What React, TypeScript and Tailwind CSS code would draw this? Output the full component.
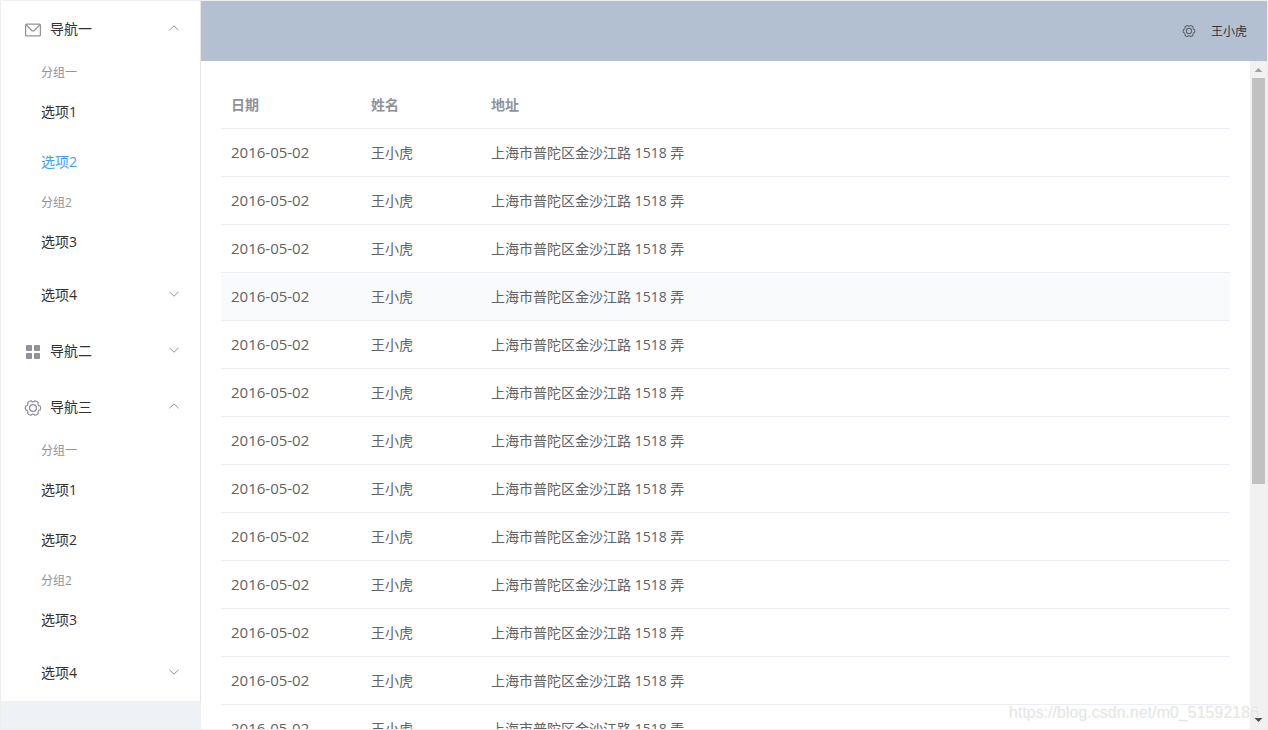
import { useState } from 'react';
import type { ReactNode, UIEvent } from 'react';

const groups = [
  { title: '分组一', items: ['选项1', '选项2'] },
  { title: '分组2', items: ['选项3'] },
];

const rows = Array.from({ length: 20 }, () => ({
  date: '2016-05-02',
  name: '王小虎',
  address: '上海市普陀区金沙江路 1518 弄',
}));

function MessageIcon() {
  return (
    <svg viewBox="0 0 18 18" className="size-[18px]" fill="none" stroke="currentColor" strokeWidth="1.3" aria-hidden="true">
      <rect x="1.6" y="3.1" width="14.8" height="11.8" rx="1.2" />
      <path d="M2 3.6 L7.4 9.2 Q9 10.6 10.6 9.2 L16 3.6" />
    </svg>
  );
}

function MenuIcon() {
  return (
    <svg viewBox="0 0 18 18" className="size-[18px]" fill="currentColor" aria-hidden="true">
      <rect x="2" y="2" width="6" height="6" rx="0.8" />
      <rect x="10" y="2" width="6" height="6" rx="0.8" />
      <rect x="2" y="10" width="6" height="6" rx="0.8" />
      <rect x="10" y="10" width="6" height="6" rx="0.8" />
    </svg>
  );
}

function SettingIcon({ className }: { className: string }) {
  return (
    <svg viewBox="-9 -9 18 18" className={className} fill="none" stroke="currentColor" strokeWidth="1.3" strokeLinejoin="round" aria-hidden="true">
      <path d="M7.2 -1.9 Q8 0 7.2 1.9 Q4.4 2.5 5.25 5.3 Q4 7 2 7.2 Q0 5 -2 7.2 Q-4 7 -5.25 5.3 Q-4.4 2.5 -7.2 1.9 Q-8 0 -7.2 -1.9 Q-4.4 -2.5 -5.25 -5.3 Q-4 -7 -2 -7.2 Q0 -5 2 -7.2 Q4 -7 5.25 -5.3 Q4.4 -2.5 7.2 -1.9Z" />
      <circle r="3.4" />
    </svg>
  );
}

function Chevron({ open }: { open: boolean }) {
  return (
    <svg viewBox="0 0 12 12" className="mb-0.5 size-3 text-[#909399]" fill="none" stroke="currentColor" strokeWidth="1" aria-hidden="true">
      <path d={open ? 'M1.5 8.2 L6 3.8 L10.5 8.2' : 'M1.5 3.8 L6 8.2 L10.5 3.8'} />
    </svg>
  );
}

interface SubmenuProps {
  title: string;
  icon?: ReactNode;
  defaultOpen?: boolean;
  children?: ReactNode;
}

function Submenu({ title, icon, defaultOpen = false, children }: SubmenuProps) {
  const [open, setOpen] = useState(defaultOpen);

  return (
    <li>
      <button
        type="button"
        aria-expanded={open}
        onClick={() => setOpen(!open)}
        className={`flex h-14 w-full cursor-pointer items-center pr-5 text-left text-sm ${icon ? 'pl-5' : 'pl-10'}`}
      >
        {icon && <span className="mt-0.5 mr-[5px] flex w-6 justify-center text-[#909399]">{icon}</span>}
        <span className="flex-1">{title}</span>
        <Chevron open={open} />
      </button>
      {open && children}
    </li>
  );
}

function MenuGroups({ active, onSelect }: { active?: string; onSelect: (item: string) => void }) {
  return (
    <ul>
      {groups.map((group) => (
        <li key={group.title}>
          <div className="flex h-[30px] items-center pt-0.5 pl-10 text-xs text-[#909399]">{group.title}</div>
          <ul>
            {group.items.map((item) => (
              <li key={item}>
                <a
                  href="#"
                  onClick={(e) => {
                    e.preventDefault();
                    onSelect(item);
                  }}
                  className={`flex h-[50px] items-center pl-10 text-sm ${item === active ? 'text-[#409eff]' : ''}`}
                >
                  {item}
                </a>
              </li>
            ))}
          </ul>
        </li>
      ))}
      <Submenu title="选项4" />
    </ul>
  );
}

export default function App() {
  const [active, setActive] = useState('1-选项2');
  const [scroll, setScroll] = useState(0);

  const handleScroll = (e: UIEvent<HTMLElement>) => {
    const el = e.currentTarget;
    setScroll(el.scrollTop / (el.scrollHeight - el.clientHeight));
  };

  const pick = (menu: string) => (item: string) => setActive(`${menu}-${item}`);
  const activeIn = (menu: string) => (active.startsWith(`${menu}-`) ? active.slice(2) : undefined);

  return (
    <div className="relative flex h-screen border border-[#eee] bg-white font-['Open_Sans','Noto_Sans_CJK_SC',sans-serif] text-[#303133]">
      {/* Side navigation */}
      <aside className="w-[200px] shrink-0 overflow-y-auto bg-[#eef1f6] [scrollbar-width:none]">
        <nav>
          <ul className="border-r border-[#e6e6e6] bg-white">
            <Submenu title="导航一" icon={<MessageIcon />} defaultOpen>
              <MenuGroups active={activeIn('1')} onSelect={pick('1')} />
            </Submenu>
            <Submenu title="导航二" icon={<MenuIcon />}>
              <MenuGroups active={activeIn('2')} onSelect={pick('2')} />
            </Submenu>
            <Submenu title="导航三" icon={<SettingIcon className="size-[18px]" />} defaultOpen>
              <MenuGroups active={activeIn('3')} onSelect={pick('3')} />
            </Submenu>
          </ul>
        </nav>
      </aside>

      <div className="flex min-w-0 flex-1 flex-col">
        <header className="flex h-[60px] shrink-0 items-center justify-end gap-[15px] bg-[#b3c0d1] px-5 text-xs text-[#333]">
          <button type="button" aria-label="设置" className="cursor-pointer text-[#606266]">
            <SettingIcon className="size-3.5" />
          </button>
          <span className="pt-0.5">王小虎</span>
        </header>

        <div className="flex min-h-0 flex-1">
          <main onScroll={handleScroll} className="min-w-0 flex-1 overflow-y-auto p-5 [scrollbar-width:none]">
            <table className="w-full table-fixed border-separate border-spacing-0 text-left text-sm text-[#606266]">
              <thead className="text-[#909399]">
                <tr className="h-12">
                  <th className="w-[140px] border-b border-[#ebeef5] px-2.5 font-bold">日期</th>
                  <th className="w-[120px] border-b border-[#ebeef5] px-2.5 font-bold">姓名</th>
                  <th className="border-b border-[#ebeef5] px-2.5 font-bold">地址</th>
                </tr>
              </thead>
              <tbody>
                {rows.map((row, i) => (
                  <tr key={i} className={`h-12 hover:bg-[#f5f7fa] ${i === 3 ? 'bg-[#f9fafc]' : ''}`}>
                    <td className="border-b border-[#ebeef5] px-2.5 text-[15px]">{row.date}</td>
                    <td className="border-b border-[#ebeef5] px-2.5">{row.name}</td>
                    <td className="border-b border-[#ebeef5] px-2.5">{row.address}</td>
                  </tr>
                ))}
              </tbody>
            </table>
          </main>

          {/* Scrollbar */}
          <div className="flex w-[17px] shrink-0 flex-col items-center bg-[#f1f1f1]" aria-hidden="true">
            <svg viewBox="0 0 17 17" className="size-[17px] shrink-0" fill="#a3a3a3">
              <path d="M4.5 11 L8.5 7 L12.5 11Z" />
            </svg>
            <div className="flex w-[13px] flex-1 flex-col">
              <div style={{ flexGrow: scroll }} />
              <div className="h-[64%] bg-[#c1c1c1]" />
              <div style={{ flexGrow: 1 - scroll }} />
            </div>
            <svg viewBox="0 0 17 17" className="size-[17px] shrink-0" fill="#505050">
              <path d="M4.5 6 L8.5 10 L12.5 6Z" />
            </svg>
          </div>
        </div>
      </div>

      <span className="pointer-events-none absolute right-2 bottom-1 font-['Liberation_Sans',sans-serif] text-base text-[#e6e6e6] [text-shadow:-1px_-1px_0_#fafafa]">
        https://blog.csdn.net/m0_51592186
      </span>
    </div>
  );
}
